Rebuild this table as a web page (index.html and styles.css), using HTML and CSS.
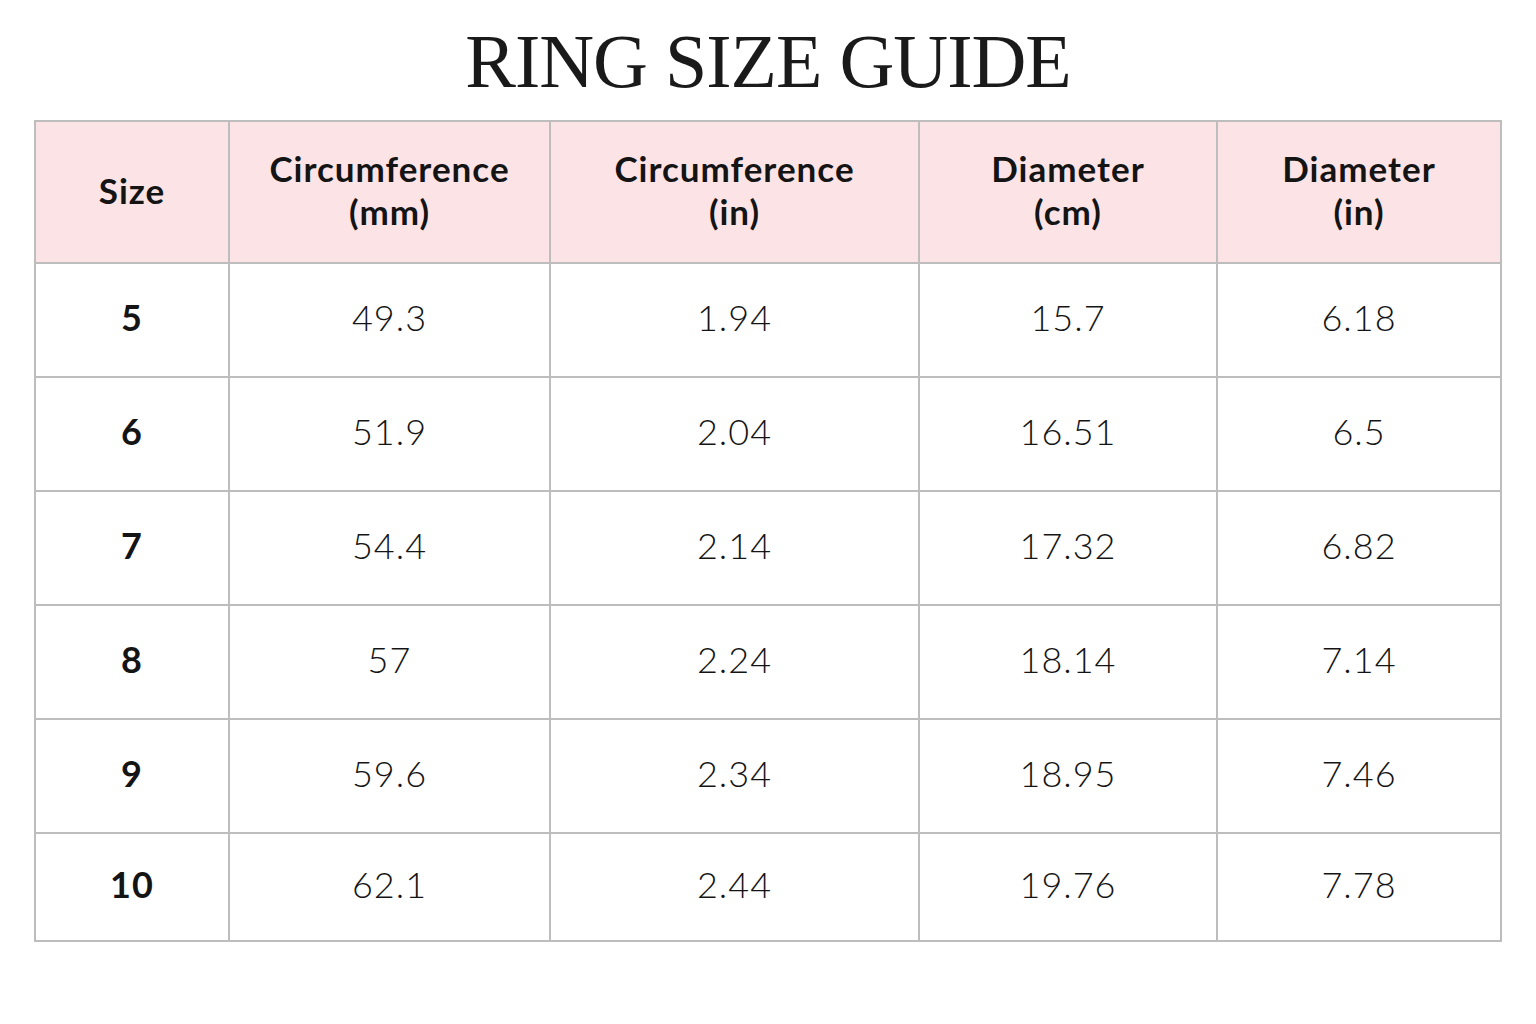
FILE: index.html
```html
<!DOCTYPE html>
<html lang="en">
<head>
<meta charset="utf-8">
<title>Ring Size Guide</title>
<link rel="stylesheet" href="styles.css">
</head>
<body>
<main class="page">
  <h1 class="title">RING SIZE GUIDE</h1>
  <table class="chart">
    <colgroup>
      <col class="c1"><col class="c2"><col class="c3"><col class="c4"><col class="c5">
    </colgroup>
    <thead>
      <tr>
        <th>Size</th>
        <th>Circumference<br>(mm)</th>
        <th>Circumference<br>(in)</th>
        <th>Diameter<br>(cm)</th>
        <th>Diameter<br>(in)</th>
      </tr>
    </thead>
    <tbody>
      <tr><td class="size">5</td><td>49.3</td><td>1.94</td><td>15.7</td><td>6.18</td></tr>
      <tr><td class="size">6</td><td>51.9</td><td>2.04</td><td>16.51</td><td>6.5</td></tr>
      <tr><td class="size">7</td><td>54.4</td><td>2.14</td><td>17.32</td><td>6.82</td></tr>
      <tr><td class="size">8</td><td>57</td><td>2.24</td><td>18.14</td><td>7.14</td></tr>
      <tr><td class="size">9</td><td>59.6</td><td>2.34</td><td>18.95</td><td>7.46</td></tr>
      <tr class="last"><td class="size">10</td><td>62.1</td><td>2.44</td><td>19.76</td><td>7.78</td></tr>
    </tbody>
  </table>
</main>
</body>
</html>
```
FILE: styles.css
```css
html, body {
  margin: 0;
  padding: 0;
  background: #ffffff;
}

.page {
  width: 1536px;
  height: 1024px;
  padding-top: 23px;
  box-sizing: border-box;
}

.title {
  margin: 0 0 21px 0;
  height: 76px;
  font-family: "Liberation Serif", "Times New Roman", serif;
  font-weight: 400;
  font-size: 76px;
  line-height: 76px;
  letter-spacing: -1px;
  text-align: center;
  color: #1a1a1a;
}

.chart {
  margin-left: 34px;
  border-collapse: collapse;
  table-layout: fixed;
  width: 1466px;
  font-family: Lato, "Noto Sans", sans-serif;
  color: #141414;
}

.c1 { width: 194px; }
.c2 { width: 321px; }
.c3 { width: 369px; }
.c4 { width: 298px; }
.c5 { width: 284px; }

.chart th,
.chart td {
  border: 2px solid #bdbdbd;
  text-align: center;
  vertical-align: middle;
  padding: 0;
}

.chart th {
  height: 136px;
  padding-bottom: 4px;
  background: #fce4e6;
  font-size: 35px;
  font-weight: 700;
  line-height: 43px;
  letter-spacing: 1px;
}

.chart td {
  height: 106px;
  padding-bottom: 6px;
  font-size: 36px;
  font-weight: 300;
  letter-spacing: 1px;
}

.chart tr.last td {
  height: 100px;
}

.chart td.size {
  font-weight: 700;
  font-size: 36px;
  letter-spacing: 1px;
}
```
